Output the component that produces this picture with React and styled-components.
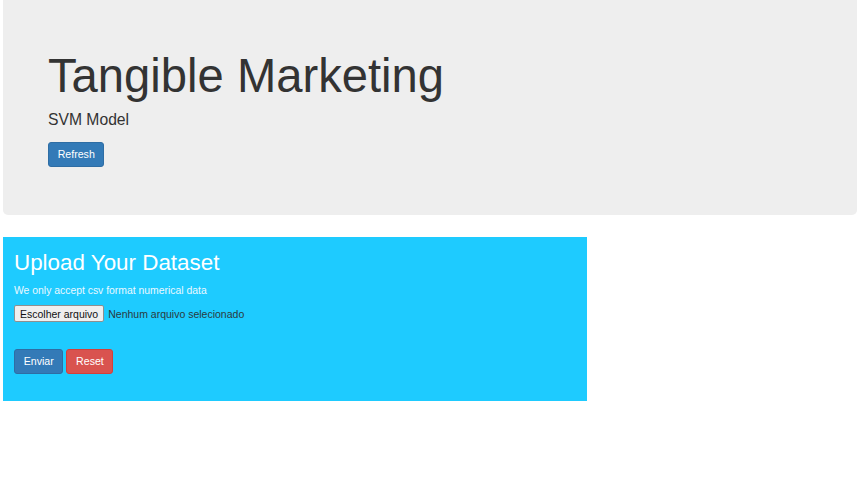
import React from "react";
import styled, { createGlobalStyle } from "styled-components";

const GlobalStyle = createGlobalStyle`
  html, body {
    margin: 0;
    padding: 0;
    background: #ffffff;
  }
  body {
    font-family: "Liberation Sans", Arial, Helvetica, sans-serif;
    color: #333333;
  }
`;

const Page = styled.div`
  display: flex;
  flex-direction: column;
  align-items: flex-start;
  padding: 0 3px;
`;

const Jumbotron = styled.header`
  align-self: stretch;
  background: #eeeeee;
  border-radius: 0 0 5px 5px;
  padding: 50px 45px 48px;
  display: flex;
  flex-direction: column;
  align-items: flex-start;
`;

const Title = styled.h1`
  margin: 0;
  font-size: 47.2px;
  line-height: 52px;
  font-weight: 400;
  color: #333333;
`;

const Lead = styled.p`
  margin: 7px 0 11px;
  font-size: 15.7px;
  line-height: 22px;
  font-weight: 400;
`;

const Button = styled.button`
  display: inline-flex;
  align-items: center;
  justify-content: center;
  height: 24.5px;
  padding: 0 8.7px;
  font-family: inherit;
  font-size: 10.6px;
  color: #ffffff;
  background: ${(p) => (p.danger ? "#d9534f" : "#337ab7")};
  border: 1px solid ${(p) => (p.danger ? "#d43f3a" : "#2e6da4")};
  border-radius: 3px;
  cursor: pointer;
`;

const Upload = styled.section`
  margin-top: 22px;
  width: 584px;
  box-sizing: border-box;
  background: #1ecbff;
  padding: 14px 11px 27px;
  display: flex;
  flex-direction: column;
  align-items: flex-start;
`;

const UploadTitle = styled.h2`
  margin: 0;
  font-size: 22.4px;
  line-height: 24px;
  font-weight: 400;
  color: #ffffff;
`;

const Hint = styled.p`
  margin: 8.5px 0 0;
  font-size: 10.4px;
  line-height: 15px;
  color: #eaf8ff;
`;

const FileRow = styled.label`
  margin-top: 7px;
  display: flex;
  align-items: center;
  gap: 4px;
  font-size: 10.5px;
  color: #2a3a40;
`;

const FileButton = styled.span`
  display: inline-flex;
  align-items: center;
  height: 17px;
  box-sizing: border-box;
  padding: 0 5px;
  background: #efefef;
  border: 1px solid #8f8f8f;
  border-radius: 2px;
  color: #111111;
`;

const Actions = styled.div`
  margin-top: 27px;
  display: flex;
  gap: 3px;
`;

export default function App() {
  return (
    <>
      <GlobalStyle />
      <Page>
        <Jumbotron>
          <Title>Tangible Marketing</Title>
          <Lead>SVM Model</Lead>
          <Button>Refresh</Button>
        </Jumbotron>
        <Upload>
          <UploadTitle>Upload Your Dataset</UploadTitle>
          <Hint>We only accept csv format numerical data</Hint>
          <FileRow>
            <FileButton>Escolher arquivo</FileButton>
            <span>Nenhum arquivo selecionado</span>
          </FileRow>
          <Actions>
            <Button>Enviar</Button>
            <Button danger>Reset</Button>
          </Actions>
        </Upload>
      </Page>
    </>
  );
}
